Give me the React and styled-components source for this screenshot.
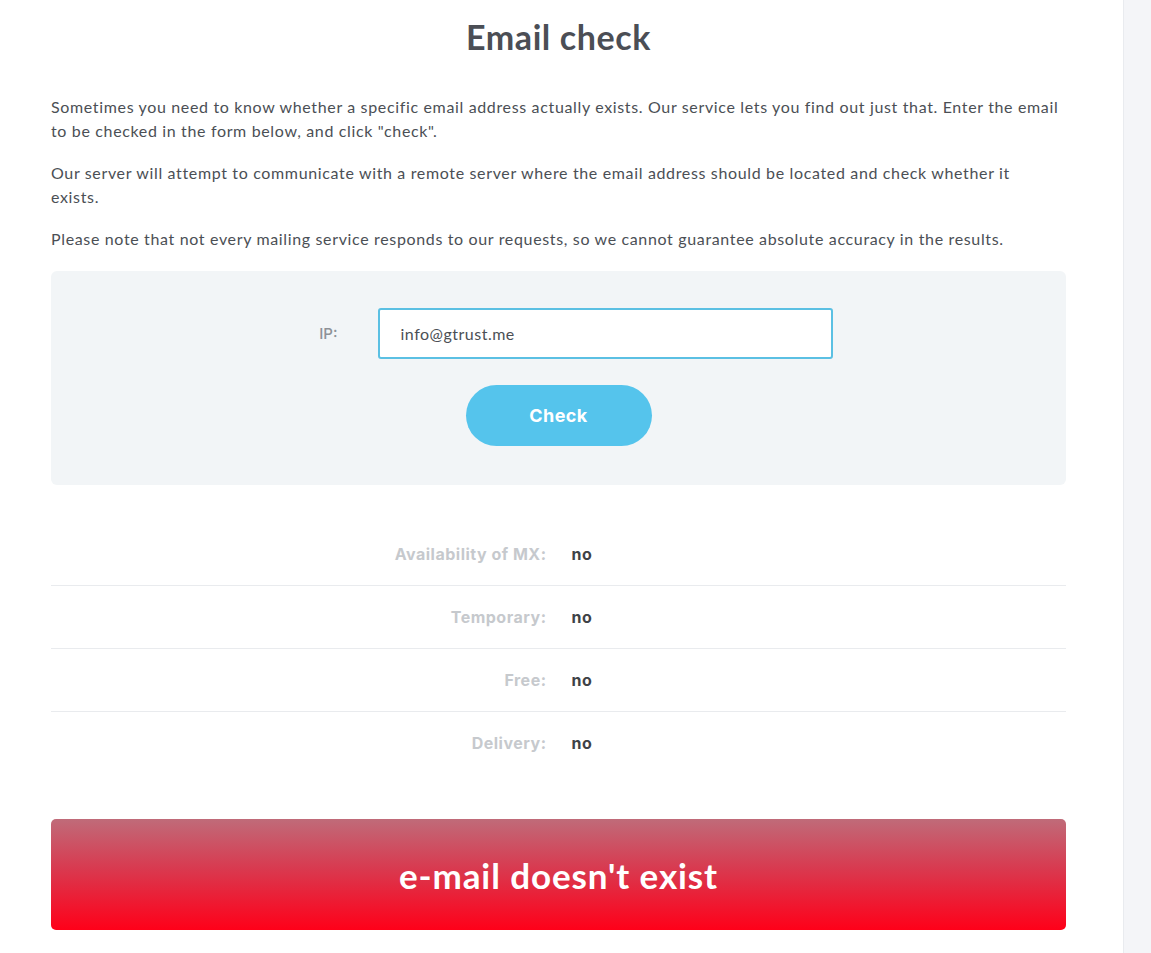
import React from 'react'
import styled, { createGlobalStyle } from 'styled-components';

const GlobalStyle = createGlobalStyle`
  html, body {
    margin: 0;
    padding: 0;
    background: #fff;
  }
  * {
    box-sizing: border-box;
  }
`;

const Page = styled.div`
  display: flex;
  min-height: 100vh;
  font-family: Lato, "Open Sans", sans-serif;
  color: #4b4f55;
`;

const Main = styled.main`
  flex: 1;
  padding: 15px 57px 21px 51px;
`;

const Sidebar = styled.aside`
  width: 28px;
  flex-shrink: 0;
  background: #f4f5f8;
  border-left: 1px solid #e9ebef;
`;

const Title = styled.h1`
  margin: 0;
  font-size: 34px;
  line-height: 44px;
  font-weight: 700;
  letter-spacing: 0.6px;
  text-align: center;
  color: #4b4e55;
`;

const Intro = styled.div`
  margin-top: 36px;
  padding-right: 5px;
  display: flex;
  flex-direction: column;
  gap: 18px;
`;

const Text = styled.p`
  margin: 0;
  font-size: 16px;
  line-height: 24px;
  letter-spacing: 0.65px;
  color: #4b4f55;
`;

const FormBox = styled.form`
  margin-top: 20px;
  background: #f2f5f7;
  border-radius: 6px;
  padding: 37px 0 39px;
  display: flex;
  flex-direction: column;
  align-items: center;
  gap: 26px;
`;

const FieldRow = styled.div`
  display: flex;
  align-items: center;
`;

const FieldLabel = styled.label`
  width: 93px;
  padding-right: 40px;
  text-align: right;
  font-family: Inter, "Open Sans", sans-serif;
  font-size: 15px;
  font-weight: 500;
  color: #8d9196;
`;

const Input = styled.input`
  width: 455px;
  height: 51px;
  border: 2px solid #5bc0e3;
  border-radius: 3px;
  background: #fff;
  padding: 0 21px;
  font-family: Lato, "Open Sans", sans-serif;
  font-size: 16px;
  letter-spacing: 0.5px;
  color: #4b4f55;
  outline: none;
`;

const CheckButton = styled.button`
  width: 186px;
  height: 61px;
  border: none;
  border-radius: 31px;
  background: #55c4ec;
  color: #fff;
  font-family: Inter, "Open Sans", sans-serif;
  font-size: 18px;
  font-weight: 700;
  letter-spacing: 0.4px;
  cursor: pointer;
`;

const Results = styled.div`
  margin-top: 38px;
`;

const ResultRow = styled.div`
  display: grid;
  grid-template-columns: 1fr 1fr;
  height: ${props => props.last ? '62px' : '63px'};
  align-items: center;
  border-bottom: ${props => props.last ? 'none' : '1px solid #e9ebee'};
  font-family: Inter, "Open Sans", sans-serif;
  font-size: 16px;
  font-weight: 700;
  letter-spacing: 0.5px;
`;

const ResultLabel = styled.div`
  text-align: right;
  padding-right: 12px;
  color: #c6c9cd;
`;

const ResultValue = styled.div`
  padding-left: 13px;
  color: #3e4247;
`;

const Verdict = styled.div`
  margin-top: 45px;
  height: 111px;
  border-radius: 5px;
  background: linear-gradient(to bottom, #c06b79 0%, #d9394f 45%, #ff0019 100%);
  display: flex;
  align-items: center;
  justify-content: center;
  color: #fff;
  font-size: 35px;
  font-weight: 700;
  letter-spacing: 0.9px;
`;

const rows = [
  { label: 'Availability of MX:', value: 'no' },
  { label: 'Temporary:', value: 'no' },
  { label: 'Free:', value: 'no' },
  { label: 'Delivery:', value: 'no' },
];

export default function App() {
  return (
    <Page>
      <GlobalStyle />
      <Main>
        <Title>Email check</Title>
        <Intro>
          <Text>Sometimes you need to know whether a specific email address actually exists. Our service lets you find out just that. Enter the email to be checked in the form below, and click "check".</Text>
          <Text>Our server will attempt to communicate with a remote server where the email address should be located and check whether it exists.</Text>
          <Text>Please note that not every mailing service responds to our requests, so we cannot guarantee absolute accuracy in the results.</Text>
        </Intro>
        <FormBox onSubmit={e => e.preventDefault()}>
          <FieldRow>
            <FieldLabel htmlFor="email">IP:</FieldLabel>
            <Input id="email" type="text" defaultValue="info@gtrust.me" />
          </FieldRow>
          <CheckButton type="submit">Check</CheckButton>
        </FormBox>
        <Results>
          {rows.map((r, i) => (
            <ResultRow key={r.label} last={i === rows.length - 1}>
              <ResultLabel>{r.label}</ResultLabel>
              <ResultValue>{r.value}</ResultValue>
            </ResultRow>
          ))}
        </Results>
        <Verdict>e-mail doesn't exist</Verdict>
      </Main>
      <Sidebar />
    </Page>
  )
}
